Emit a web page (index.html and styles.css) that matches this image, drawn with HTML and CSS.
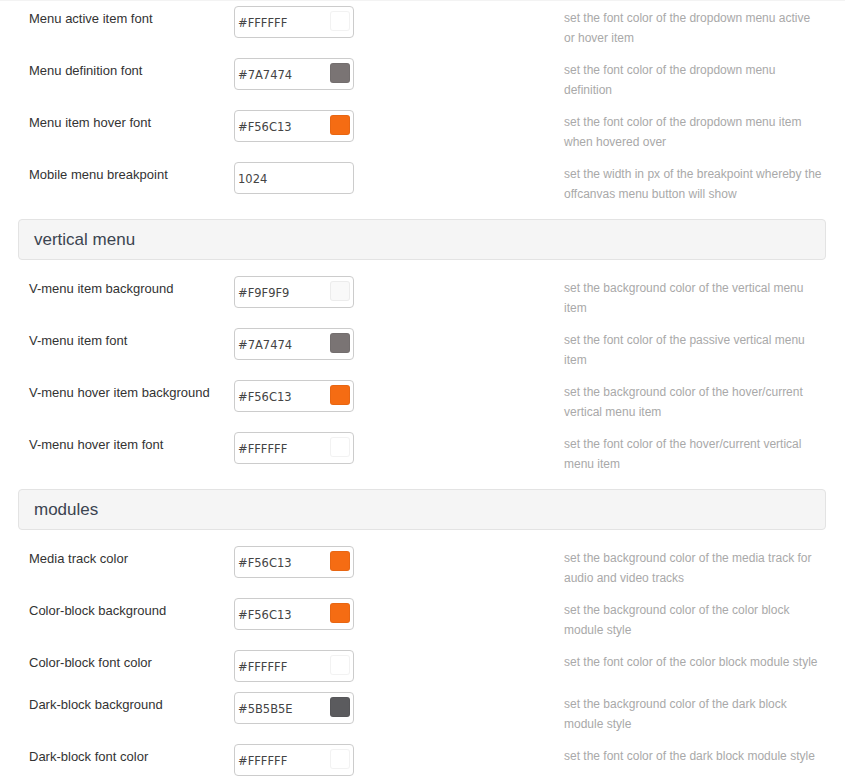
FILE: index.html
```html
<!DOCTYPE html>
<html lang="en">
<head>
    <meta charset="UTF-8">
    <meta name="viewport" content="width=device-width, initial-scale=1.0">
    <title>Theme colours</title>
    <link rel="stylesheet" href="styles.css">
</head>
<body>

    <div class="panel">

        <div class="row">
            <label class="row-label">Menu active item font</label>
            <div class="color-input"><span class="color-value">#FFFFFF</span><span class="swatch" style="background-color: #FFFFFF"></span></div>
            <p class="row-desc">set the font color of the dropdown menu active or hover item</p>
        </div>
        <div class="row">
            <label class="row-label">Menu definition font</label>
            <div class="color-input"><span class="color-value">#7A7474</span><span class="swatch" style="background-color: #7A7474"></span></div>
            <p class="row-desc">set the font color of the dropdown menu definition</p>
        </div>
        <div class="row">
            <label class="row-label">Menu item hover font</label>
            <div class="color-input"><span class="color-value">#F56C13</span><span class="swatch" style="background-color: #F56C13"></span></div>
            <p class="row-desc">set the font color of the dropdown menu item when hovered over</p>
        </div>
        <div class="row">
            <label class="row-label">Mobile menu breakpoint</label>
            <div class="color-input"><span class="color-value">1024</span></div>
            <p class="row-desc">set the width in px of the breakpoint whereby the offcanvas menu button will show</p>
        </div>

        <h3 class="section-title">vertical menu</h3>

        <div class="row">
            <label class="row-label">V-menu item background</label>
            <div class="color-input"><span class="color-value">#F9F9F9</span><span class="swatch" style="background-color: #F9F9F9"></span></div>
            <p class="row-desc">set the background color of the vertical menu item</p>
        </div>
        <div class="row">
            <label class="row-label">V-menu item font</label>
            <div class="color-input"><span class="color-value">#7A7474</span><span class="swatch" style="background-color: #7A7474"></span></div>
            <p class="row-desc">set the font color of the passive vertical menu item</p>
        </div>
        <div class="row">
            <label class="row-label">V-menu hover item background</label>
            <div class="color-input"><span class="color-value">#F56C13</span><span class="swatch" style="background-color: #F56C13"></span></div>
            <p class="row-desc">set the background color of the hover/current vertical menu item</p>
        </div>
        <div class="row">
            <label class="row-label">V-menu hover item font</label>
            <div class="color-input"><span class="color-value">#FFFFFF</span><span class="swatch" style="background-color: #FFFFFF"></span></div>
            <p class="row-desc">set the font color of the hover/current vertical menu item</p>
        </div>

        <h3 class="section-title">modules</h3>

        <div class="row">
            <label class="row-label">Media track color</label>
            <div class="color-input"><span class="color-value">#F56C13</span><span class="swatch" style="background-color: #F56C13"></span></div>
            <p class="row-desc">set the background color of the media track for audio and video tracks</p>
        </div>
        <div class="row">
            <label class="row-label">Color-block background</label>
            <div class="color-input"><span class="color-value">#F56C13</span><span class="swatch" style="background-color: #F56C13"></span></div>
            <p class="row-desc">set the background color of the color block module style</p>
        </div>
        <div class="row">
            <label class="row-label">Color-block font color</label>
            <div class="color-input"><span class="color-value">#FFFFFF</span><span class="swatch" style="background-color: #FFFFFF"></span></div>
            <p class="row-desc">set the font color of the color block module style</p>
        </div>
        <div class="row">
            <label class="row-label">Dark-block background</label>
            <div class="color-input"><span class="color-value">#5B5B5E</span><span class="swatch" style="background-color: #5B5B5E"></span></div>
            <p class="row-desc">set the background color of the dark block module style</p>
        </div>
        <div class="row">
            <label class="row-label">Dark-block font color</label>
            <div class="color-input"><span class="color-value">#FFFFFF</span><span class="swatch" style="background-color: #FFFFFF"></span></div>
            <p class="row-desc">set the font color of the dark block module style</p>
        </div>

    </div>

</body>
</html>
```

FILE: styles.css
```css
body {
    font-family: "Liberation Sans", Arial, sans-serif;
    background-color: #fff;
    color: #333;
    margin: 0;
    border-top: 1px solid #f3f3f3;
}

.panel {
    padding: 5px 19px 0 18px;
}

.row {
    display: grid;
    grid-template-columns: 205px 330px 259px;
    align-items: start;
    margin: 0 0 10px 11px;
}

.row-label {
    font-size: 13px;
    line-height: 20px;
    padding-top: 3px;
    color: #333;
}

.color-input {
    position: relative;
    box-sizing: border-box;
    width: 120px;
    height: 32px;
    border: 1px solid #ccc;
    border-radius: 4px;
    background-color: #fff;
    padding: 0 0 0 3px;
    display: flex;
    align-items: center;
}

.color-value {
    font-family: "DejaVu Sans", Verdana, sans-serif;
    font-size: 11.5px;
    color: #444;
    padding-top: 2px;
}

.swatch {
    position: absolute;
    top: 4px;
    right: 3px;
    width: 20px;
    height: 20px;
    border-radius: 3px;
    box-shadow: inset 0 0 0 1px rgba(0, 0, 0, 0.05);
}

.row-desc {
    margin: 0;
    padding: 2px 0 0;
    font-size: 12px;
    line-height: 20px;
    color: #a9a9a9;
}

.section-title {
    margin: 15px 0 16px;
    padding: 10px 15px;
    font-size: 17px;
    font-weight: normal;
    line-height: 19px;
    color: #3b4450;
    background-color: #f5f5f5;
    border: 1px solid #e3e3e3;
    border-radius: 4px;
}
```
